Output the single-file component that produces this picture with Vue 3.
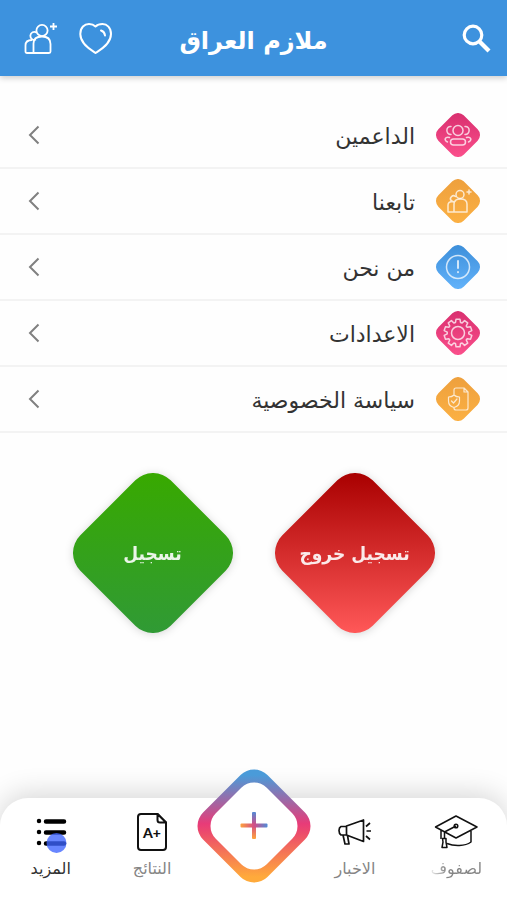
<script setup>
const items = [
  { label: 'الداعمين', icon: 'group', tone: 'pink' },
  { label: 'تابعنا', icon: 'follow', tone: 'orange' },
  { label: 'من نحن', icon: 'info', tone: 'blue' },
  { label: 'الاعدادات', icon: 'gear', tone: 'pink' },
  { label: 'سياسة الخصوصية', icon: 'policy', tone: 'orange' },
]

// Diamond centred on (c, c), reaching `half` each way, with corners of radius r
const diamond = (c, half, r) => {
  const k = r * Math.SQRT1_2
  const d = half - r + k
  const arc = (x, y) => `A${r} ${r} 0 0 1 ${(c + x).toFixed(2)} ${(c + y).toFixed(2)}`
  const line = (x, y) => `L${(c + x).toFixed(2)} ${(c + y).toFixed(2)}`
  return `M${c - k} ${c - d}${arc(k, -d)}${line(d, -k)}${arc(d, k)}${line(k, d)}${arc(-k, d)}${line(-d, k)}${arc(-d, -k)}Z`
}

const smallDiamond = diamond(22, 22, 8)
const largeDiamond = diamond(80, 80, 25)
const outerRing = diamond(57, 56.5, 19)
const innerRing = diamond(57, 43.5, 18)

// Toothed outline of the settings gear, centred on 22,22
const gearPath = (() => {
  const points = []
  const teeth = 10
  for (let i = 0; i < teeth; i++) {
    const a = (i / teeth) * Math.PI * 2 - Math.PI / 2
    for (const [offset, radius] of [[-0.24, 10.8], [-0.14, 14], [0.14, 14], [0.24, 10.8]]) {
      points.push(`${(22 + radius * Math.cos(a + offset)).toFixed(2)} ${(22 + radius * Math.sin(a + offset)).toFixed(2)}`)
    }
  }
  return `M${points.join('L')}Z`
})()
</script>

<template>
  <div class="page" dir="rtl" lang="ar">
    <header class="topbar">
      <button class="icon-btn" type="button" aria-label="بحث">
        <svg width="30" height="30" viewBox="0 0 30 30" fill="none" stroke="#fff">
          <circle cx="12" cy="11" r="8.8" stroke-width="3.2" />
          <path d="M18.500 17.500 28 27" stroke-width="4.2" />
        </svg>
      </button>
      <h1>ملازم العراق</h1>
      <div class="actions">
        <button class="icon-btn" type="button" aria-label="المفضلة">
          <svg width="34" height="34" viewBox="0 0 34 34" fill="none" stroke="#fff" stroke-width="2" stroke-linecap="round" stroke-linejoin="round">
            <path d="M16.500 31C12 28 1.300 22 1.300 12C1.300 5.500 5.500 2 10 2C13 2 15 3 16.500 4.500C18 3 20.500 2 23.500 2C28 2 32 5.500 32 12C32 22 21 28 16.500 31Z" />
            <path d="M22 8.500C24.500 9.300 25.700 11 26 13.500" />
          </svg>
        </button>
        <button class="icon-btn" type="button" aria-label="متابعة">
          <svg width="34" height="34" viewBox="0 0 34 34" fill="none" stroke="#fff" stroke-width="1.800" stroke-linejoin="round">
            <circle cx="18" cy="8.500" r="5.600" />
            <path d="M12.500 10.500A4 4 0 1 0 12 17.500" />
            <path d="M9.500 31V21.500C9.500 17 12.500 14.500 18 14.500S26.500 17 26.500 22V29.500Q26.500 31 25 31H3Q1.500 31 1.500 29.500V23.500C1.500 20 4 18 8 18M29.500 1V8M26 4.500H33" />
          </svg>
        </button>
      </div>
    </header>

    <main>
      <ul class="menu">
        <li v-for="item in items" :key="item.label">
          <a href="#" class="row">
            <svg class="badge" width="44" height="44" viewBox="0 0 44 44" aria-hidden="true">
              <defs>
                <linearGradient :id="'tone-' + item.icon" x1="0" y1="0" x2="0" y2="1">
                  <stop offset="0" :class="item.tone + '-start'" />
                  <stop offset="1" :class="item.tone + '-end'" />
                </linearGradient>
              </defs>
              <path :d="smallDiamond" :fill="'url(#tone-' + item.icon + ')'" />
              <g fill="none" stroke="#fff" stroke-opacity=".75" stroke-width="1.500" stroke-linecap="round" stroke-linejoin="round">
                <template v-if="item.icon === 'group'">
                  <circle cx="22" cy="17.500" r="5" />
                  <path d="M15 13.500C9.500 13 9.500 21 15 21.500M29 13.500C34.500 13 34.500 21 29 21.500M11.500 29C7.500 27 9 23.500 13.500 24.500M32.500 29C36.500 27 35 23.500 30.500 24.500" />
                  <rect x="14.500" y="26" width="15" height="6" rx="3" />
                </template>
                <template v-else-if="item.icon === 'follow'">
                  <circle cx="24" cy="15.500" r="4" />
                  <path d="M19.500 17.500A3 3 0 1 0 19.500 22M18 33V25C18 21.500 20 20 24.500 20S31 22 31 25V33H12V26C12 23.500 14 22.500 17 22.500M33 11V15M31 13H35" />
                </template>
                <template v-else-if="item.icon === 'info'">
                  <circle cx="22" cy="22" r="11.500" />
                  <path d="M22 16V23M22 27V27.200" stroke-width="2" />
                </template>
                <template v-else-if="item.icon === 'gear'">
                  <path :d="gearPath" />
                  <circle cx="22" cy="22" r="6.500" />
                </template>
                <template v-else>
                  <path d="M18 17V13Q18 11 20 11H28L32 15V31Q32 33 30 33H20Q18 33 18 31M28 11V15H32M18 18C16 20 14 20 12.500 20V24C12.500 28 16 30 18 30.500C20 30 23.500 28 23.500 24V20C22 20 20 20 18 18ZM15.500 24L17.500 26L21 22" stroke-width="1.200" />
                </template>
              </g>
            </svg>
            <span class="row-label">{{ item.label }}</span>
            <svg class="chevron" width="12" height="20" viewBox="0 0 12 20" fill="none" stroke="#808080" stroke-width="2" aria-hidden="true">
              <path d="M10.500 1.500 2 10 10.500 18.500" />
            </svg>
          </a>
        </li>
      </ul>

      <div class="choices">
        <button class="diamond" type="button">
          <svg viewBox="0 0 160 160" aria-hidden="true">
            <defs>
              <linearGradient id="red" x1="0" y1="0" x2="0" y2="1">
                <stop offset="0" stop-color="#a90000" />
                <stop offset="1" stop-color="#ff5858" />
              </linearGradient>
            </defs>
            <path :d="largeDiamond" fill="url(#red)" />
          </svg>
          <span>تسجيل خروج</span>
        </button>
        <button class="diamond" type="button">
          <svg viewBox="0 0 160 160" aria-hidden="true">
            <defs>
              <linearGradient id="green" x1="0" y1="0" x2="0" y2="1">
                <stop offset="0" stop-color="#38a900" />
                <stop offset="1" stop-color="#309a35" />
              </linearGradient>
            </defs>
            <path :d="largeDiamond" fill="url(#green)" />
          </svg>
          <span>تسجيل</span>
        </button>
      </div>
    </main>

    <nav class="tabs">
      <a href="#" class="tab">
        <svg width="44" height="36" viewBox="0 0 44 36" fill="none" stroke="#111" stroke-width="1.500" stroke-linejoin="round" aria-hidden="true">
          <path d="M1.500 13 22 2 43 13 22 24ZM22 12 10.500 18V25M7 16.500V25M37 17V28C31 32.500 20 32.500 13 29.500" />
          <circle cx="22" cy="12" r="1.800" />
          <path d="M8.500 24.500H12V28L13 33.500H8L9 28Z" />
        </svg>
        <span class="fading">لصفوف</span>
      </a>
      <a href="#" class="tab">
        <svg width="36" height="36" viewBox="0 0 36 36" fill="none" stroke="#111" stroke-width="1.700" stroke-linejoin="round" aria-hidden="true">
          <path d="M9.500 12 26.500 6V27.500L9.500 21ZM9.500 12.500H4Q2 13.500 2 16.500T4 21H9.500M6 21 8 30H12L10.500 21.500M29 12.500 33 9M29.500 17H34M29 22 33 25.500" />
        </svg>
        <span>الاخبار</span>
      </a>
      <button class="add" type="button" aria-label="اضافة">
        <svg width="114" height="114" viewBox="0 0 114 114" aria-hidden="true">
          <defs>
            <linearGradient id="ring" x1="0" y1="0" x2="0" y2="1">
              <stop offset="0.050" stop-color="#4a9bd9" />
              <stop offset="0.480" stop-color="#e83b78" />
              <stop offset="0.560" stop-color="#ec4b6c" />
              <stop offset="0.950" stop-color="#ffaa3b" />
            </linearGradient>
            <linearGradient id="plus-v" gradientUnits="userSpaceOnUse" x1="57" y1="42" x2="57" y2="70">
              <stop offset="0" stop-color="#4a8edb" />
              <stop offset="0.500" stop-color="#d44c86" />
              <stop offset="1" stop-color="#ffa53b" />
            </linearGradient>
            <linearGradient id="plus-h" gradientUnits="userSpaceOnUse" x1="43" y1="56" x2="71" y2="56">
              <stop offset="0" stop-color="#ffa53b" />
              <stop offset="0.500" stop-color="#d44c86" />
              <stop offset="1" stop-color="#4a8edb" />
            </linearGradient>
          </defs>
          <path :d="outerRing" fill="url(#ring)" />
          <path :d="innerRing" fill="#fff" />
          <rect x="55" y="43" width="4" height="27" rx="1" fill="url(#plus-v)" />
          <rect x="43.500" y="54.500" width="27" height="4" rx="1" fill="url(#plus-h)" />
        </svg>
      </button>
      <a href="#" class="tab">
        <svg width="32" height="38" viewBox="0 0 32 38" fill="none" stroke="#111" stroke-width="2" stroke-linejoin="round" aria-hidden="true">
          <path d="M5 1H21.500L30 9.500V34Q30 37 27 37H5Q2 37 2 34V4Q2 1 5 1Z" />
          <path d="M21.500 1V7Q21.500 9.500 24 9.500H30Z" fill="#fff" />
          <text x="7" y="25" class="grade">A+</text>
        </svg>
        <span>النتائج</span>
      </a>
      <a href="#" class="tab active" aria-current="page">
        <svg width="32" height="40" viewBox="0 0 32 40" stroke="#000" stroke-width="4.500" stroke-linecap="round" overflow="visible" aria-hidden="true">
          <path d="M4 9V9.010M4 20V20.010M4 31V31.010M11 9.500H29M11 20.500H29M11 31.500H29" />
          <circle cx="21.500" cy="31" r="10" fill="#3d64ff" fill-opacity=".78" stroke="none" />
        </svg>
        <span>المزيد</span>
      </a>
    </nav>
  </div>
</template>

<style>
body {
  margin: 0;
  background: #fefefe;
}
</style>

<style scoped>
.page {
  display: flex;
  flex-direction: column;
  min-height: 100vh;
  overflow: hidden;
  background: #fefefe;
  color: #333;
  font-family: "DejaVu Sans", sans-serif;
}

button {
  padding: 0;
  border: 0;
  background: none;
  color: inherit;
  font-family: inherit;
  cursor: pointer;
}

a {
  color: inherit;
  text-decoration: none;
}

svg {
  display: block;
}

.topbar {
  display: grid;
  grid-template-columns: 1fr auto 1fr;
  align-items: center;
  height: 76px;
  padding: 2px 16px 0;
  box-sizing: border-box;
  background: #3d92de;
  box-shadow: 0 2px 6px rgba(0, 0, 0, 0.2);
  color: #fff;
}

h1 {
  margin: 0;
  padding-top: 4px;
  font-size: 24px;
  line-height: 36px;
  font-weight: 700;
}

.icon-btn {
  justify-self: start;
}

.actions {
  display: flex;
  justify-content: flex-end;
  gap: 21px;
  padding-left: 8px;
}

.menu {
  margin: 0;
  padding: 27px 0 0;
  list-style: none;
}

.row {
  display: flex;
  align-items: center;
  height: 66px;
  padding: 0 27px 0 28px;
  box-sizing: border-box;
  border-bottom: 2px solid #f3f3f3;
}

.row-label {
  flex: 1;
  margin-right: 21px;
  padding-top: 4px;
  font-size: 22px;
  line-height: 32px;
}

.pink-start { stop-color: #d92f6f; }
.pink-end { stop-color: #fa4f8b; }
.orange-start { stop-color: #eea03d; }
.orange-end { stop-color: #fbb043; }
.blue-start { stop-color: #3d8fda; }
.blue-end { stop-color: #62b2fa; }

.choices {
  display: flex;
  justify-content: center;
  gap: 42px;
  padding: 40px 0;
}

.diamond {
  display: grid;
  place-items: center;
  width: 160px;
  color: #fff;
  font-family: "DejaVu Sans Condensed", "DejaVu Sans", sans-serif;
  font-size: 19px;
  font-weight: 700;
}

.diamond > * {
  grid-area: 1 / 1;
}

.diamond svg {
  width: 100%;
  filter: drop-shadow(0 1px 4px rgba(0, 0, 0, 0.16));
}

.diamond span {
  z-index: 1;
  opacity: 0.9;
}

.tabs {
  display: grid;
  grid-template-columns: repeat(5, minmax(0, 1fr));
  height: 102px;
  margin-top: auto;
  border-radius: 28px 28px 0 0;
  background: #fff;
  box-shadow: 0 -4px 28px rgba(0, 0, 0, 0.16);
}

.tab {
  display: grid;
  grid-template-rows: 40px 34px;
  align-content: start;
  place-items: center;
  padding-top: 14px;
  color: #858585;
  font-size: 16px;
  line-height: 28px;
}

.active {
  color: #333;
}

.fading {
  background: linear-gradient(to left, #858585 70%, #f4f4f4);
  background-clip: text;
  color: transparent;
}

.grade {
  direction: ltr;
  fill: #111;
  stroke: none;
  font: 900 14px Lato, sans-serif;
}

.add {
  place-self: start center;
  margin-top: -29px;
}
</style>
